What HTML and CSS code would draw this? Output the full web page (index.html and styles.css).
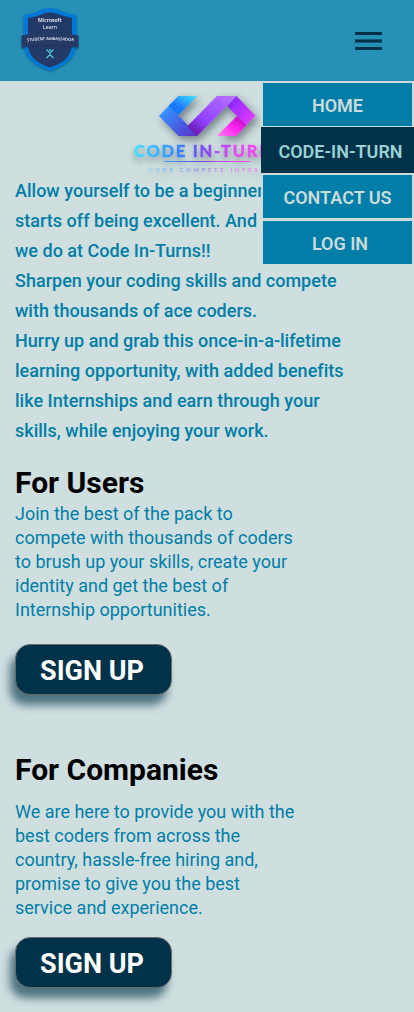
FILE: index.html
```html
<!DOCTYPE html>
<html lang="en">
<head>
<meta charset="utf-8">
<meta name="viewport" content="width=device-width, initial-scale=1">
<title>Code In-Turn</title>
<link rel="stylesheet" href="styles.css">
</head>
<body>
<header class="header">
  <svg class="badge" width="64" height="68" viewBox="0 0 64 68" role="img" aria-label="Microsoft Learn Student Ambassador">
    <path d="M3.500 11Q16 9 22 5.500Q31 2.500 38 5.500Q45 9 56.500 11V42Q55 53 45 60Q37 65 30 67Q23 65 15 60Q5 53 3.500 42Z" fill="#0078d7"/>
    <path d="M8 14Q18 12 24 9.500Q30 7.500 36 9.500Q43 12 52 14V43Q49 54 42 58Q36 62 30 63.500Q24 62 18 58Q10 53 8 43Z" fill="#243a66"/>
    <path d="M2 32.500Q30 26 58 32.500V45Q30 38 2 45Z" fill="#102b50" opacity=".35"/>
    <path d="M1.500 31.500Q30 25 58.500 31.500V43.500Q30 38 1.500 43.500Z" fill="#253a64"/>
    <path id="ribbon" d="M7 37.500Q30 34.500 54.500 37.500" fill="none"/>
    <text class="badge-title" x="18" y="18" textLength="23.500" lengthAdjust="spacingAndGlyphs">Microsoft</text>
    <text class="badge-title light" x="23" y="24.500" textLength="14" lengthAdjust="spacingAndGlyphs">Learn</text>
    <text class="badge-ribbon"><textPath href="#ribbon" textLength="47" lengthAdjust="spacingAndGlyphs">STUDENT AMBASSADOR</textPath></text>
    <path d="M26.500 45.500L29 48H31L33.500 45.500M30 48V51M26.500 54L29 51.500H31L33.500 54" fill="none" stroke="#50d5e8" stroke-width="1.100"/>
    <circle cx="30" cy="45.800" r=".9" fill="#50d5e8"/>
  </svg>
  <button class="burger" aria-label="Menu">
    <svg width="27" height="18" viewBox="0 0 27 18"><path d="M0 0H27V3H0ZM0 15H27V18H0Z" fill="#003249"/><path d="M0 7H27V11H0Z" fill="#125b7b"/><path d="M0 8H27V10H0Z" fill="#003249"/></svg>
  </button>
  <nav class="menu">
    <a class="menu-item">HOME</a>
    <a class="menu-item active">CODE-IN-TURN</a>
    <a class="menu-item">CONTACT US</a>
    <a class="menu-item login">LOG IN</a>
  </nav>
</header>
<main class="content">
  <svg class="logo" width="160" height="95" viewBox="0 0 160 95" role="img" aria-label="Code In-Turn">
    <defs>
      <linearGradient id="blue" x1="0" y1="1" x2="1" y2="0"><stop stop-color="#087df9"/><stop offset=".4" stop-color="#1e78ff"/><stop offset="1" stop-color="#3fe8ff"/></linearGradient>
      <linearGradient id="indigo" x1="0" y1="0" x2="1" y2="1"><stop offset=".2" stop-color="#3299ff"/><stop offset=".9" stop-color="#553bd0"/></linearGradient>
      <linearGradient id="violet" x1="0" y1="1" x2="1" y2="0"><stop offset=".08" stop-color="#6416a5"/><stop offset=".35" stop-color="#9040ff"/><stop offset="1" stop-color="#b776ff"/></linearGradient>
      <linearGradient id="purple" x1="0" y1="0" x2="1" y2="1"><stop stop-color="#7a24ff"/><stop offset="1" stop-color="#f040ff"/></linearGradient>
      <linearGradient id="pink" x1="0" y1="1" x2="1" y2="0"><stop stop-color="#ff80ef"/><stop offset=".5" stop-color="#ff22f3"/><stop offset=".9" stop-color="#b511bb"/></linearGradient>
      <linearGradient id="word" gradientUnits="userSpaceOnUse" x1="5" y1="0" x2="140" y2="0"><stop stop-color="#3ee0ff"/><stop offset=".35" stop-color="#397dff"/><stop offset=".52" stop-color="#8448f4"/><stop offset=".75" stop-color="#e44bf6"/><stop offset="1" stop-color="#ff42f3"/></linearGradient>
      <filter id="shadow" x="-20%" y="-30%" width="140%" height="170%"><feDropShadow dx="3" dy="4" stdDeviation="4" flood-color="#26383b" flood-opacity=".55"/></filter>
      <filter id="text-shadow" x="-20%" y="-50%" width="140%" height="220%"><feDropShadow dx="0" dy="4" stdDeviation="3" flood-color="#26383b" flood-opacity=".45"/></filter>
    </defs>
    <g filter="url(#shadow)">
      <path d="M29 35L48.500 15H67L48 34L58 44.500L67 55H48.500Z" fill="url(#indigo)"/>
      <path d="M38.500 25L48.500 15H67L48.500 34Z" fill="url(#blue)"/>
      <path d="M57.500 45L87 15H106.500L67 55Z" fill="url(#violet)"/>
      <path d="M97 25L106.500 15L125.500 35L116 44Z" fill="url(#purple)"/>
      <path d="M107 35L116.500 44L106 55H87Z" fill="url(#pink)"/>
    </g>
    <g filter="url(#text-shadow)">
      <text class="logo-word" x="4" y="75.500" textLength="138" fill="url(#word)" stroke="url(#word)">CODE IN-TURN</text>
      <path d="M34 80H120V81H34Z" fill="url(#word)"/>
      <text class="logo-tag" x="19" y="91" textLength="116" fill="url(#word)">CODE COMPETE INTERN</text>
    </g>
  </svg>
  <p class="intro">Allow yourself to be a beginner<br>starts off being excellent. And<br>we do at Code In-Turns!!<br>Sharpen your coding skills and compete<br>with thousands of ace coders.<br>Hurry up and grab this once-in-a-lifetime<br>learning opportunity, with added benefits<br>like Internships and earn through your<br>skills, while enjoying your work.</p>
  <section class="users">
    <h2 class="heading">For Users</h2>
    <p class="copy">Join the best of the pack to<br>compete with thousands of coders<br>to brush up your skills, create your<br>identity and get the best of<br>Internship opportunities.</p>
    <button class="signup">SIGN UP</button>
  </section>
  <section class="companies">
    <h2 class="heading">For Companies</h2>
    <p class="copy">We are here to provide you with the<br>best coders from across the<br>country, hassle-free hiring and,<br>promise to give you the best<br>service and experience.</p>
    <button class="signup">SIGN UP</button>
  </section>
</main>
</body>
</html>
```
FILE: styles.css
```css
* { box-sizing: border-box; }
body {
  margin: 0;
  height: 1012px;
  overflow: hidden;
  background: #cfdedf;
  font-family: Roboto, "Liberation Sans", sans-serif;
}
.header {
  position: relative;
  display: flex;
  justify-content: space-between;
  align-items: flex-start;
  height: 81px;
  padding: 4px 32px 0 20px;
  background: #2690b6;
}
.badge {
  overflow: visible;
  filter: drop-shadow(0 1px 1px rgba(0, 40, 70, .35));
}
.badge-title { fill: #fff; font: 600 6px "Open Sans", sans-serif; }
.badge-title.light { font-weight: 400; }
.badge-ribbon { fill: #eef3fa; font: 600 4px "Open Sans", sans-serif; }
.burger {
  display: flex;
  margin-top: 28px;
  padding: 0;
  border: 0;
  background: none;
}
.menu {
  position: absolute;
  z-index: 2;
  top: 81px;
  right: 0;
  width: 153px;
}
.menu-item {
  display: block;
  height: 46px;
  border: 2px solid #ccdbdc;
  border-bottom-width: 1px;
  background: #007ea7;
  color: #ccdbdc;
  font-size: 18px;
  font-weight: 600;
  line-height: 45px;
  text-align: center;
  white-space: nowrap;
}
.menu-item.active {
  border-color: #003249;
  background: #003249;
  color: #9ad1d4;
  padding-left: 6px;
}
.menu-item.login { padding-left: 5px; }
.content {
  display: flex;
  flex-direction: column;
  align-items: flex-start;
  padding-left: 15px;
}
.logo {
  margin-left: 115px;
  overflow: visible;
}
.logo-word { font: 900 16.5px Lato, sans-serif; stroke-width: .3px; }
.logo-tag { font: 900 5.5px Lato, sans-serif; opacity: .5; }
.intro {
  margin: 0;
  color: #007ea7;
  font-size: 18px;
  font-weight: 500;
  line-height: 30px;
  letter-spacing: .01px;
  white-space: nowrap;
}
.users { margin-top: 19px; }
.companies { margin-top: 57px; }
.heading {
  margin: 0;
  color: #000;
  font-size: 30px;
  font-weight: 700;
  line-height: 36px;
}
.copy {
  margin: 1px 0 0;
  color: #007ea7;
  font-size: 18px;
  line-height: 24px;
}
.companies .copy { margin-top: 12px; }
.signup {
  display: block;
  width: 157px;
  height: 51px;
  margin-top: 22px;
  padding: 4px 3px 0 0;
  border: 1px solid #696969;
  border-radius: 15px;
  background: #003249;
  box-shadow: -5px 10px 8px rgba(0, 50, 73, .62);
  color: #fff;
  font: 700 27px/45px Roboto, sans-serif;
}
.companies .signup { margin-top: 17px; }
```
